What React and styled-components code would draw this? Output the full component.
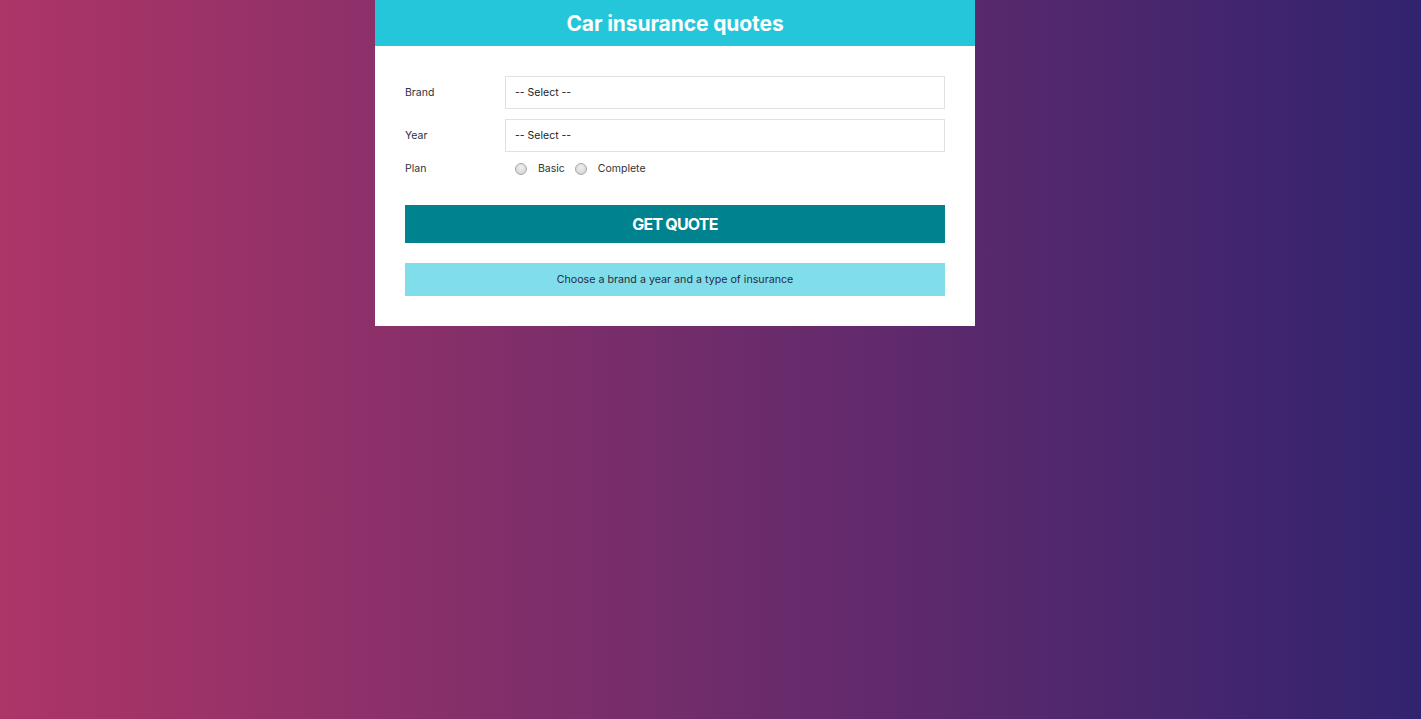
import React, { useState } from 'react';
import styled, { createGlobalStyle } from 'styled-components';

const GlobalStyle = createGlobalStyle`
  html, body {
    margin: 0;
    padding: 0;
  }
  body {
    font-family: Inter, "Noto Sans", sans-serif;
  }
  * {
    box-sizing: border-box;
  }
`;

const App = () => {
  const [brand, setBrand] = useState('');
  const [year, setYear] = useState('');
  const [plan, setPlan] = useState('');

  return (
    <>
      <GlobalStyle />
      <Page>
        <Card>
          <Header>Car insurance quotes</Header>
          <Form>
            <Field>
              <Label>Brand</Label>
              <Select value={brand} onChange={e => setBrand(e.target.value)}>
                <option value="">-- Select --</option>
                <option value="american">American</option>
                <option value="european">European</option>
                <option value="asian">Asian</option>
              </Select>
            </Field>
            <Field>
              <Label>Year</Label>
              <Select value={year} onChange={e => setYear(e.target.value)}>
                <option value="">-- Select --</option>
                <option value="2024">2024</option>
                <option value="2023">2023</option>
              </Select>
            </Field>
            <PlanRow>
              <Label>Plan</Label>
              <RadioGroup>
                <RadioLabel>
                  <Radio type="radio" name="plan" value="basic"
                    checked={plan === 'basic'} onChange={() => setPlan('basic')} />
                  Basic
                </RadioLabel>
                <RadioLabel>
                  <Radio type="radio" name="plan" value="complete"
                    checked={plan === 'complete'} onChange={() => setPlan('complete')} />
                  Complete
                </RadioLabel>
              </RadioGroup>
            </PlanRow>
            <SubmitButton type="button">Get quote</SubmitButton>
            <Message>Choose a brand a year and a type of insurance</Message>
          </Form>
        </Card>
      </Page>
    </>
  );
};

export default App;

const Page = styled.div`
  min-height: 100vh;
  padding-right: 71px;
  background: linear-gradient(to right, #ad3567 0%, #32236f 100%);
`;

const Card = styled.div`
  width: 600px;
  margin: 0 auto;
  background: #fff;
`;

const Header = styled.h1`
  margin: 0;
  height: 46px;
  display: flex;
  align-items: center;
  justify-content: center;
  background: #26c6da;
  color: #fff;
  font-size: 21px;
  font-weight: 700;
  letter-spacing: -0.1px;
`;

const Form = styled.form`
  padding: 30px;
  display: flex;
  flex-direction: column;
`;

const Field = styled.div`
  display: flex;
  align-items: center;
  margin-bottom: 10px;
`;

const PlanRow = styled(Field)`
  margin-bottom: 0;
`;

const Label = styled.label`
  flex: 0 0 100px;
  font-size: 10.5px;
  color: #2d3140;
`;

const Select = styled.select`
  flex: 1;
  height: 33px;
  padding: 0 9px;
  border: 1px solid #e1e1e1;
  border-radius: 0;
  background: #fff;
  font-family: Inter, "Noto Sans", sans-serif;
  font-size: 10.5px;
  color: #222;
  appearance: none;
  outline: none;
`;

const RadioGroup = styled.div`
  display: flex;
  align-items: center;
  gap: 10px;
  padding-left: 10px;
`;

const RadioLabel = styled.label`
  display: flex;
  align-items: center;
  gap: 11px;
  font-size: 10.5px;
  color: #333;
`;

const Radio = styled.input`
  appearance: none;
  margin: 0;
  width: 12px;
  height: 12px;
  border-radius: 50%;
  border: 1px solid #a9a9a9;
  background: radial-gradient(circle at 50% 35%, #f0f0f0 0%, #d4d4d4 80%);

  &:checked {
    background: radial-gradient(circle, #444 0 3px, #e6e6e6 3.5px);
  }
`;

const SubmitButton = styled.button`
  margin-top: 30px;
  height: 38px;
  border: none;
  background: #00838f;
  color: #fff;
  font-family: Inter, "Noto Sans", sans-serif;
  font-size: 16px;
  font-weight: 700;
  text-transform: uppercase;
  letter-spacing: -0.8px;
  cursor: pointer;
`;

const Message = styled.div`
  margin-top: 20px;
  height: 33px;
  display: flex;
  align-items: center;
  justify-content: center;
  background: #80deea;
  color: #2a2a45;
  font-size: 10.7px;
`;
